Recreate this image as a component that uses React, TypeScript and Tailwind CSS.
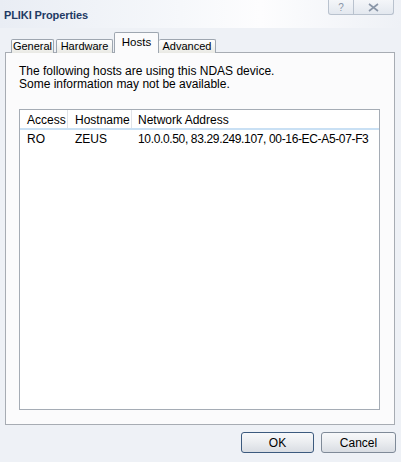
import React from "react";

export default function App() {
  const font = { fontFamily: '"Liberation Sans", Arial, sans-serif' };
  const tab =
    "h-[14px] mb-[-1px] border border-b-0 border-[#9ea6b0] bg-[linear-gradient(180deg,#ffffff,#e9e9e4)] rounded-t-[2px] text-[11px] leading-[13px] text-center";
  return (
    <div
      className="w-[401px] h-[462px] bg-[#eef1f6] relative overflow-hidden text-[12px] text-black"
      style={font}
    >
      {/* title bar */}
      <div className="h-[28px] relative bg-[linear-gradient(90deg,#e9edf4_0%,#f6f8fb_45%,#fdfdfe_65%,#eef1f6_100%)]">
        <div className="absolute left-[4px] top-[7px] text-[11px] font-bold text-[#1e3a64] tracking-[-0.1px]">
          PLIKI Properties
        </div>
        <div className="absolute left-[328px] top-[0px] w-[66px] h-[15px] flex border border-t-0 border-[#b9c2ce] rounded-b-[3px] bg-[linear-gradient(180deg,#f4f6f9,#e3e8ef)]">
          <div className="w-[25px] h-full flex items-center justify-center text-[10px] text-[#8a96a8] border-r border-[#b9c2ce]">
            ?
          </div>
          <div className="flex-1 flex items-center justify-center">
            <svg width="11" height="9" viewBox="0 0 11 9">
              <path d="M1 1 L10 8 M10 1 L1 8" stroke="#8a96a8" strokeWidth="1.6" fill="none" />
            </svg>
          </div>
        </div>
      </div>

      {/* tabs */}
      <div className="h-[24px] flex items-end pl-[11px] relative z-10">
        <div className={tab + " w-[43px]"}>General</div>
        <div className={tab + " w-[57px] ml-[2px]"}>Hardware</div>
        <div className="h-[21px] w-[45px] mb-[-1px] ml-[1px] pt-[3px] border border-b-0 border-[#9ea6b0] bg-[#fbfbfc] rounded-t-[2px] text-[11.5px] leading-[13px] text-center">
          Hosts
        </div>
        <div className={tab + " w-[57px] border-l-0"}>Advanced</div>
      </div>

      {/* panel */}
      <div className="ml-[5px] w-[390px] h-[373px] border border-[#a7acb3] bg-[#fbfbfc] pt-[12px] pl-[13px]">
        <div className="leading-[13px] text-[12px]">
          <div>The following hosts are using this NDAS device.</div>
          <div>Some information may not be available.</div>
        </div>
        <div className="mt-[18px] w-[361px] h-[301px] border border-[#a5acb5] bg-white">
          <div className="flex h-[20px] relative border-b-2 border-[#c9e0f4]">
            <div className="w-[48px] pl-[7px] border-r border-[#e0e3e8] pt-[3px] leading-[14px]">Access</div>
            <div className="w-[64px] pl-[7px] border-r border-[#e0e3e8] pt-[3px] leading-[14px]">Hostname</div>
            <div className="flex-1 pl-[6px] pt-[3px] leading-[14px] whitespace-nowrap">Network Address</div>
          </div>
          <div className="flex h-[18px] items-center whitespace-nowrap">
            <div className="w-[48px] pl-[7px]">RO</div>
            <div className="w-[64px] pl-[7px]">ZEUS</div>
            <div className="flex-1 pl-[6px] tracking-[-0.35px]">10.0.0.50, 83.29.249.107, 00-16-EC-A5-07-F3</div>
          </div>
        </div>
      </div>

      {/* buttons */}
      <div className="flex pl-[241px] mt-[7px] gap-[7px]">
        <button className="w-[73px] h-[21px] border border-[#3c5a7e] rounded-[3px] bg-[linear-gradient(180deg,#f7f8fa_0%,#eceef1_45%,#d9dde3_100%)] text-[12px] text-black leading-[18px]">
          OK
        </button>
        <button className="w-[75px] h-[21px] border border-[#7f8a98] rounded-[3px] bg-[linear-gradient(180deg,#f7f8fa_0%,#eceef1_45%,#d9dde3_100%)] text-[12px] text-black leading-[18px]">
          Cancel
        </button>
      </div>
    </div>
  );
}
